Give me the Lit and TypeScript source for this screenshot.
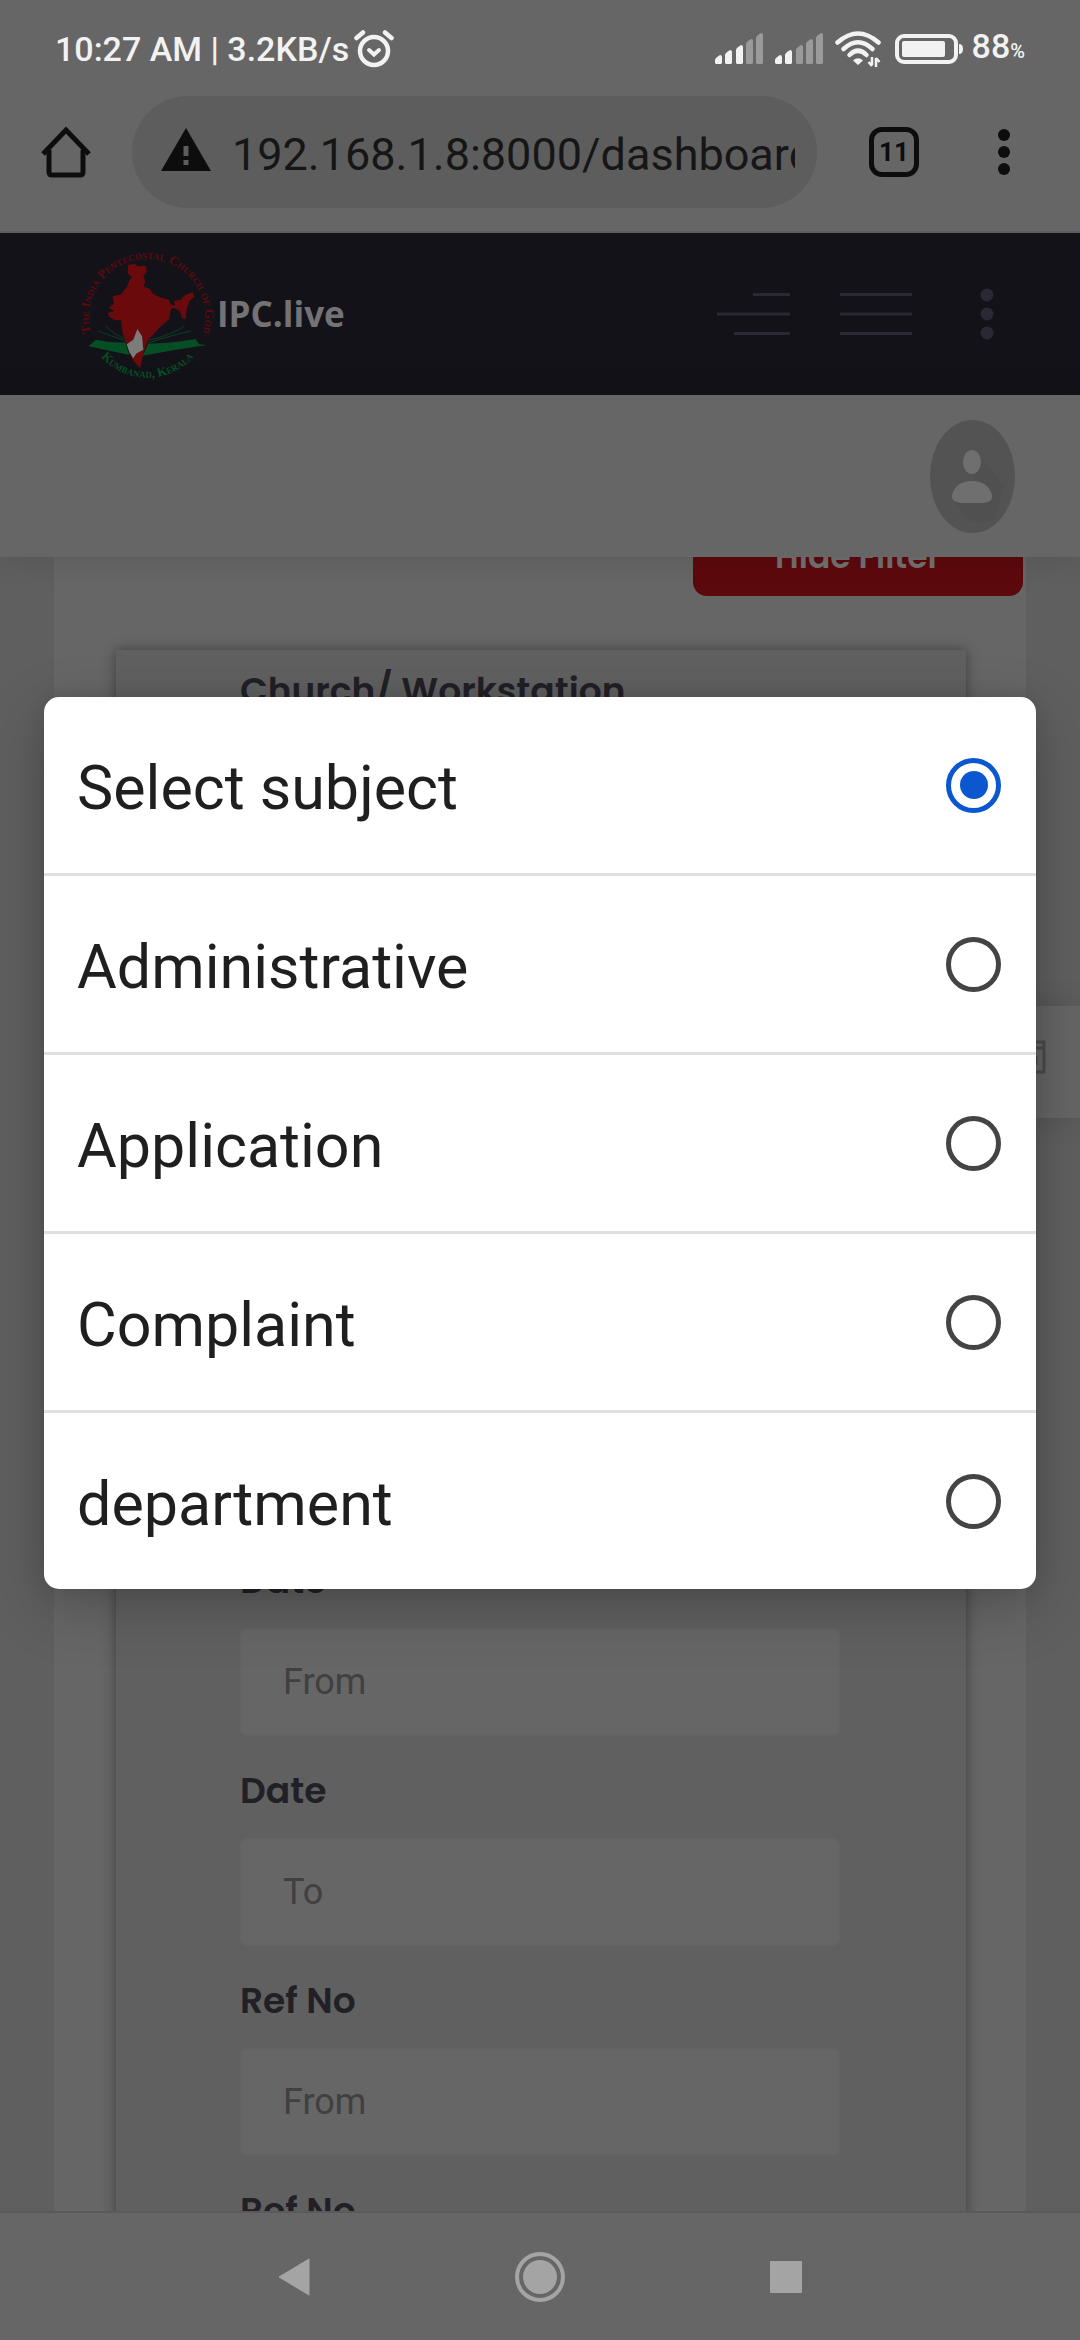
import { LitElement, html, css, svg } from "lit";
import { customElement, state } from "lit/decorators.js";

const SUBJECTS = ["Select subject", "Administrative", "Application", "Complaint", "department"];

const FIELDS = [
  { id: "date-from", label: "Date", hint: "From" },
  { id: "date-to", label: "Date", hint: "To" },
  { id: "ref-from", label: "Ref No", hint: "From" },
  { id: "ref-to", label: "Ref No", hint: "To" },
];

const BARS = [
  { x: 0, top: 22 },
  { x: 10, top: 17 },
  { x: 21, top: 12 },
  { x: 31, top: 6 },
  { x: 41, top: 0 },
];

@customElement("status-bar")
class StatusBar extends LitElement {
  static styles = css`
    :host {
      display: flex;
      align-items: center;
      justify-content: space-between;
      height: 97px;
      padding: 0 55px;
      box-sizing: border-box;
      color: #f2f2f2;
      font: 500 34px/40px Roboto, sans-serif;
    }
    .side {
      display: flex;
      align-items: center;
    }
    .alarm {
      margin-left: 5px;
    }
    .signal {
      margin-right: 12px;
    }
    .wifi {
      margin-right: 14px;
    }
    .battery {
      margin-right: 8px;
    }
    .percent {
      font-size: 20px;
    }
    svg {
      display: block;
    }
  `;

  private signal(level: number) {
    return html`<svg class="signal" width="48" height="32" viewBox="0 0 48 32" aria-hidden="true">
      ${BARS.map(
        (b, i) => svg`<path d="M${b.x} ${b.top + 5}Q${b.x} ${b.top + 3} ${b.x + 5} ${b.top}Q${b.x + 7} ${b.top} ${b.x + 7} ${b.top + 2}V30L${b.x + 6} 31H${b.x + 1}L${b.x} 30Z"
          fill=${i < level ? "#f2f2f2" : "#9a9a9a"} />`
      )}
    </svg>`;
  }

  render() {
    return html`
      <div class="side">
        <span>10:27 AM | 3.2KB/s</span>
        <svg class="alarm" width="40" height="38" viewBox="0 0 40 38" fill="none" stroke="#f2f2f2" stroke-linecap="round" aria-hidden="true">
          <circle cx="20" cy="21" r="14" stroke-width="4.500" />
          <path d="M2.500 8L9 2.500M37.500 8L31 2.500" stroke-width="4.500" />
          <path d="M15 20L20 24.500L25 20" stroke-width="4" />
        </svg>
      </div>
      <div class="side">
        ${this.signal(3)} ${this.signal(2)}
        <svg class="wifi" width="46" height="36" viewBox="0 0 46 36" fill="none" stroke="#f2f2f2" stroke-linecap="round" aria-hidden="true">
          <path d="M2.500 11.500Q23 -6.500 43.500 11.500" stroke-width="4.500" />
          <path d="M8.500 18Q23 4.500 37.500 18" stroke-width="4.500" />
          <path d="M14.500 24Q23 15.500 31.500 24" stroke-width="4.500" />
          <path d="M18 29.500Q23 25 28 29.500L23 34Z" fill="#f2f2f2" stroke="none" />
          <path d="M37 26V34M33.500 31L37 35M41 36V27M44.500 31L41 27" stroke-width="2.500" stroke-linecap="butt" />
        </svg>
        <svg class="battery" width="69" height="30" viewBox="0 0 69 30" aria-hidden="true">
          <rect x="2" y="2" width="59" height="26" rx="7" fill="none" stroke="#f2f2f2" stroke-width="4" />
          <rect x="7" y="7" width="43" height="16" rx="2" fill="#f2f2f2" />
          <path d="M64 10Q68 10 68 15Q68 20 64 20Z" fill="#f2f2f2" />
        </svg>
        <span>88<span class="percent">%</span></span>
      </div>
    `;
  }
}

@customElement("browser-toolbar")
class BrowserToolbar extends LitElement {
  static styles = css`
    :host {
      display: flex;
      align-items: center;
      height: 136px;
      padding: 0 60px 24px 40px;
      box-sizing: border-box;
      border-bottom: 2px solid #5c5c5c;
    }
    button {
      display: block;
      padding: 0;
      border: 0;
      background: none;
    }
    svg {
      display: block;
    }
    .address {
      display: flex;
      align-items: center;
      flex: 1;
      min-width: 0;
      height: 112px;
      margin: 0 52px 0 40px;
      padding: 0 22px 0 28px;
      box-sizing: border-box;
      border-radius: 56px;
      background: #5d5d5d;
    }
    .url {
      flex: 1;
      min-width: 0;
      height: 64px;
      margin-left: 20px;
      padding: 4px 0 0;
      border: 0;
      outline: 0;
      background: none;
      color: #161616;
      font: 400 45px/60px Roboto, sans-serif;
    }
    .tabs {
      width: 50px;
      height: 50px;
      margin-right: 69px;
      border: 5px solid #0d0d0d;
      border-radius: 13px;
      color: #0d0d0d;
      font: 700 26px/40px Roboto, sans-serif;
      text-align: center;
    }
  `;

  render() {
    return html`
      <button aria-label="Home">
        <svg width="52" height="52" viewBox="0 0 52 52" fill="none" stroke="#0d0d0d" stroke-width="5" stroke-linejoin="round">
          <path d="M3 28L26 4L49 28" stroke-linejoin="miter" />
          <path d="M9 24V46Q9 49 12 49H40Q43 49 43 46V24" />
        </svg>
      </button>
      <div class="address">
        <svg width="52" height="48" viewBox="0 0 52 48" aria-hidden="true">
          <path d="M26 0L51 43H1Z" fill="#0d0d0d" />
          <path d="M23.500 18H28.500V28H23.500ZM23.500 32H28.500V37H23.500Z" fill="#5d5d5d" />
        </svg>
        <input class="url" type="text" aria-label="Address" .value=${"192.168.1.8:8000/dashboard"} />
      </div>
      <button class="tabs" aria-label="Open tabs">11</button>
      <button aria-label="Browser menu">
        <svg width="32" height="50" viewBox="0 0 32 50" fill="#0d0d0d">
          <circle cx="16" cy="8" r="6" />
          <circle cx="16" cy="25" r="6" />
          <circle cx="16" cy="42" r="6" />
        </svg>
      </button>
    `;
  }
}

@customElement("site-header")
class SiteHeader extends LitElement {
  static styles = css`
    :host {
      display: block;
      position: relative;
      z-index: 1;
    }
    .brandbar {
      display: flex;
      align-items: center;
      height: 162px;
      padding: 0 70px 0 80px;
      box-sizing: border-box;
      background: #131218;
    }
    .brand {
      display: flex;
      align-items: center;
      gap: 2px;
      margin-right: auto;
      color: #737375;
      font: 700 35px/40px "Open Sans", sans-serif;
      text-decoration: none;
    }
    .ring {
      font: 700 39px "Liberation Serif", serif;
      font-variant: small-caps;
    }
    .place {
      font: 700 38px "Liberation Serif", serif;
      font-variant: small-caps;
    }
    button {
      display: block;
      padding: 0;
      border: 0;
      background: none;
    }
    svg {
      display: block;
    }
    .logo {
      overflow: visible;
    }
    .toggle {
      margin-right: 50px;
    }
    .userbar {
      display: flex;
      align-items: center;
      justify-content: flex-end;
      height: 162px;
      padding: 0 65px;
      background: #666;
      box-shadow: 0 0 30px rgba(0, 0, 0, 0.14);
    }
  `;

  render() {
    return html`
      <div class="brandbar">
        <a class="brand" href="#">
          <svg class="logo" width="135" height="133" viewBox="58 67 405 399" aria-hidden="true">
            <defs>
              <path id="upper" d="M96 335A174 174 0 1 1 422 335" />
              <path id="lower" d="M104 370A184 184 0 0 0 416 370" />
            </defs>
            <g fill="none" stroke="#0b3f26" stroke-width="3">
              <path d="M112 316Q150 330 196 346M134 300Q160 328 198 340M392 316Q340 326 262 352M372 300Q340 326 264 344" />
            </g>
            <path fill="#064f25" d="M84 362L106 342Q150 352 194 350L206 388Q150 376 84 362Z" />
            <path fill="#064f25" d="M246 390L262 354Q330 354 404 340L416 356L440 358Q340 372 246 390Z" />
            <path
              fill="#6b0a0d"
              d="M202 118L222 114L232 122L256 120L258 138L248 152L254 168L248 182L268 190L276 204L302 216L324 222L330 236L344 240L340 226L360 222L374 208L396 200L402 214L388 224L380 244L374 280L364 278L358 256L338 246L330 252L326 280L296 306L262 344L252 370L238 428L216 402L196 348L184 316L182 284L164 284L146 274L142 262L162 256L144 246L160 234L156 212L182 206L200 182L206 164L214 154L202 144Z"
            />
            <path fill="#7c7c7c" d="M230 310L244 332L248 372L226 384L218 398L206 380L198 356L218 342Z" />
            <text class="ring" fill="#5c0a10"><textPath href="#upper" startOffset="50%" text-anchor="middle">The India Pentecostal Church of God</textPath></text>
            <text class="place" fill="#064f25"><textPath href="#lower" startOffset="50%" text-anchor="middle">Kumbanad, Kerala</textPath></text>
          </svg>
          <span>IPC.live</span>
        </a>
        <button class="toggle" aria-label="Toggle sidebar">
          <svg width="74" height="44" viewBox="0 0 74 44" stroke="#2a2834" stroke-width="3">
            <path d="M37 2.500H74M1 22H74M18 41.500H74" />
          </svg>
        </button>
        <button class="toggle" aria-label="Toggle header menu">
          <svg width="72" height="44" viewBox="0 0 72 44" stroke="#2a2834" stroke-width="3">
            <path d="M0 2.500H72M0 22H72M0 41.500H72" />
          </svg>
        </button>
        <button aria-label="More">
          <svg width="48" height="52" viewBox="0 0 48 52" fill="#2a2834">
            <circle cx="25" cy="7" r="6.500" />
            <circle cx="25" cy="26" r="6.500" />
            <circle cx="25" cy="45" r="6.500" />
          </svg>
        </button>
      </div>
      <div class="userbar">
        <button aria-label="Account">
          <svg width="85" height="113" viewBox="0 0 85 113">
            <ellipse cx="42.500" cy="56.500" rx="42.500" ry="56.500" fill="#535353" />
            <path d="M50 36L74 66L64 100Q52 104 38 100L24 80L60 76L42 56Z" fill="#505050" />
            <ellipse cx="42" cy="42" rx="9" ry="12" fill="#6f6f6f" />
            <path d="M22 75Q26 61 42 61Q58 61 62 75Q63 83 50 83H34Q21 83 22 75Z" fill="#6f6f6f" />
          </svg>
        </button>
      </div>
    `;
  }
}

@customElement("filter-page")
class FilterPage extends LitElement {
  static styles = css`
    :host {
      display: block;
      overflow: hidden;
      padding: 0 54px;
      background: #5f5f5f;
    }
    .panel {
      display: flex;
      flex-direction: column;
      padding: 0 60px 0 62px;
      background: #666;
    }
    .hide {
      align-self: flex-end;
      width: 330px;
      height: 78px;
      margin: -39px -57px 54px 0;
      border: 0;
      border-radius: 14px;
      background: #5c090c;
      color: #717171;
      font: 600 33px/40px Poppins, Inter, sans-serif;
    }
    .card {
      padding: 15px 126px 0 124px;
      background: #606060;
      box-shadow: 0 0 12px rgba(0, 0, 0, 0.4);
    }
    .label {
      display: block;
      margin-bottom: 21px;
      color: #212026;
      font: 600 36px/52px Poppins, Inter, sans-serif;
    }
    .first {
      margin-bottom: 838px;
    }
    .field {
      margin-bottom: 29px;
    }
    .box {
      display: block;
      width: 100%;
      height: 108px;
      padding: 0 41px;
      box-sizing: border-box;
      border: 2px solid #646464;
      border-radius: 7px;
      outline: 0;
      background: #666;
      color: #3c3c3c;
      font: 400 36px/48px Roboto, sans-serif;
    }
    .box::placeholder {
      color: #404040;
      opacity: 1;
    }
  `;

  render() {
    return html`
      <div class="panel">
        <button class="hide">Hide Filter</button>
        <form class="card">
          <div class="label first">Church/ Workstation</div>
          ${FIELDS.map(
            (f) => html`<div class="field">
              <label class="label" for=${f.id}>${f.label}</label>
              <input class="box" id=${f.id} type="text" placeholder=${f.hint} />
            </div>`
          )}
        </form>
      </div>
    `;
  }
}

@customElement("subject-dialog")
class SubjectDialog extends LitElement {
  @state() private selected = 0;

  static styles = css`
    :host {
      display: block;
      width: 100%;
      border-radius: 15px;
      background: #fff;
      box-shadow: 0 18px 60px rgba(0, 0, 0, 0.22), 0 0 20px rgba(0, 0, 0, 0.1);
    }
    fieldset {
      margin: 0;
      padding: 0;
      border: 0;
    }
    .option {
      display: flex;
      align-items: center;
      justify-content: space-between;
      height: 176px;
      padding: 0 35px 0 33px;
      color: #1f1f1f;
      font: 400 61px/72px Roboto, sans-serif;
    }
    .option + .option {
      border-top: 3px solid #e0e0e0;
    }
    .text {
      padding-top: 6px;
    }
    .radio {
      display: grid;
      place-content: center;
      width: 55px;
      height: 55px;
      margin: 0;
      border: 5px solid #444;
      border-radius: 50%;
      box-sizing: border-box;
      appearance: none;
    }
    .radio:checked {
      border-color: #0b57d0;
    }
    .radio:checked::before {
      content: "";
      width: 28px;
      height: 28px;
      border-radius: 50%;
      background: #0b57d0;
    }
  `;

  render() {
    return html`<fieldset aria-label="Subject">
      ${SUBJECTS.map(
        (name, i) => html`<label class="option">
          <span class="text">${name}</span>
          <input class="radio" type="radio" name="subject" .checked=${i === this.selected} @change=${() => (this.selected = i)} />
        </label>`
      )}
    </fieldset>`;
  }
}

@customElement("system-nav")
class SystemNav extends LitElement {
  static styles = css`
    :host {
      display: flex;
      justify-content: center;
      align-items: center;
      height: 129px;
      border-top: 2px solid #5a5a5a;
      box-sizing: border-box;
      background: #666;
    }
    button {
      display: grid;
      place-content: center;
      width: 246px;
      height: 100px;
      padding: 0;
      border: 0;
      background: none;
    }
  `;

  render() {
    return html`
      <button aria-label="Back">
        <svg width="32" height="38" viewBox="0 0 32 38"><path d="M31 1V37L1 19Z" fill="#a4a4a4" stroke="#a4a4a4" stroke-linejoin="round" /></svg>
      </button>
      <button aria-label="Home">
        <svg width="52" height="52" viewBox="0 0 52 52">
          <circle cx="26" cy="26" r="23" fill="none" stroke="#a4a4a4" stroke-width="4" />
          <circle cx="26" cy="26" r="17" fill="#a4a4a4" />
        </svg>
      </button>
      <button aria-label="Recent apps">
        <svg width="32" height="32" viewBox="0 0 32 32"><rect width="32" height="32" rx="1" fill="#a4a4a4" /></svg>
      </button>
    `;
  }
}

@customElement("app-root")
class AppRoot extends LitElement {
  static styles = css`
    :host {
      display: flex;
      flex-direction: column;
      position: relative;
      height: 100vh;
      overflow: hidden;
      background: #666;
    }
    .page {
      flex: 1;
      min-height: 0;
    }
    .sticky {
      position: absolute;
      top: 1006px;
      right: 0;
      display: flex;
      align-items: center;
      width: 88px;
      height: 112px;
      padding: 0 0 10px 20px;
      border: 0;
      background: #656565;
      box-shadow: 0 0 30px rgba(0, 0, 0, 0.14);
    }
    .overlay {
      position: absolute;
      inset: 0;
      display: flex;
      align-items: center;
      padding: 0 44px 54px;
    }
  `;

  render() {
    return html`
      <status-bar></status-bar>
      <browser-toolbar></browser-toolbar>
      <site-header></site-header>
      <filter-page class="page"></filter-page>
      <system-nav></system-nav>
      <button class="sticky" aria-label="Calendar">
        <svg width="34" height="34" viewBox="0 0 34 34" fill="none" stroke="#4a4a4a" stroke-width="3">
          <path d="M2 2H32V32H2ZM2 8H32" />
          <rect x="18" y="17" width="6" height="6" fill="#4a4a4a" />
        </svg>
      </button>
      <div class="overlay"><subject-dialog></subject-dialog></div>
    `;
  }
}
